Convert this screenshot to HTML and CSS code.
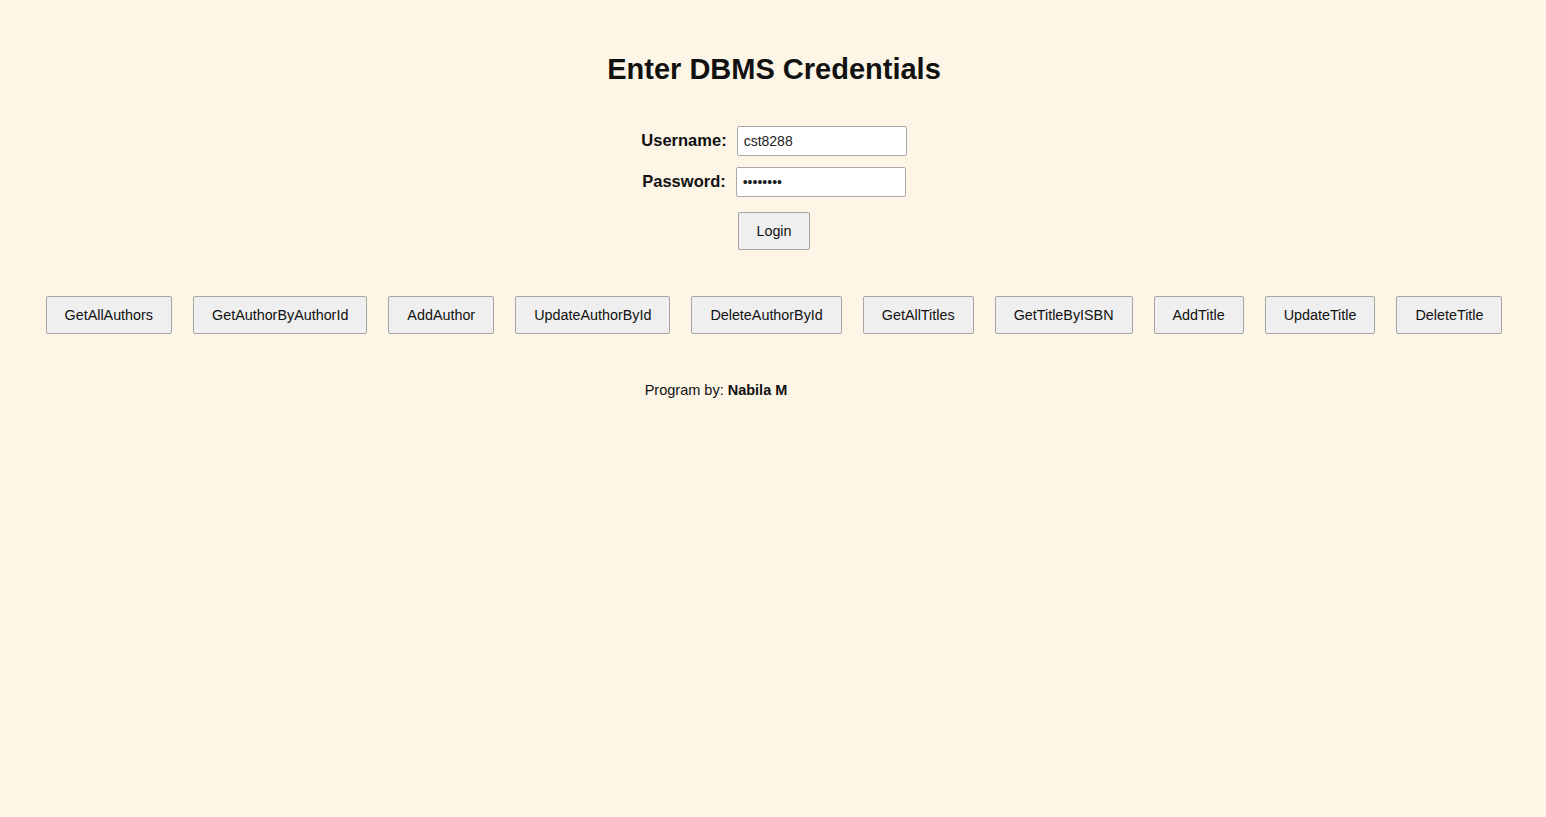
FILE: index.html
```html
<!DOCTYPE html>
<html>
<head>
<meta charset="utf-8">
<title>DBMS Credentials</title>
<link rel="stylesheet" href="styles.css">
</head>
<body>
<main class="page">
  <h1 class="title">Enter DBMS Credentials</h1>
  <form class="login">
    <div class="row">
      <label class="label" for="user">Username:</label>
      <input class="field" id="user" type="text" value="cst8288">
    </div>
    <div class="row">
      <label class="label" for="pass">Password:</label>
      <input class="field" id="pass" type="password" value="cst82888">
    </div>
    <div class="row submit">
      <button type="button" class="btn login-btn">Login</button>
    </div>
  </form>
  <div class="actions">
    <button type="button" class="btn">GetAllAuthors</button>
    <button type="button" class="btn">GetAuthorByAuthorId</button>
    <button type="button" class="btn">AddAuthor</button>
    <button type="button" class="btn">UpdateAuthorById</button>
    <button type="button" class="btn">DeleteAuthorById</button>
    <button type="button" class="btn">GetAllTitles</button>
    <button type="button" class="btn">GetTitleByISBN</button>
    <button type="button" class="btn">AddTitle</button>
    <button type="button" class="btn">UpdateTitle</button>
    <button type="button" class="btn">DeleteTitle</button>
  </div>
  <footer class="footer">
    <span>Program by: <b>Nabila M</b></span><span class="spacer"></span>
  </footer>
</main>
</body>
</html>
```
FILE: styles.css
```css
html, body {
  margin: 0;
  padding: 0;
}
body {
  background: #fdf5e6;
  font-family: "Liberation Sans", Arial, sans-serif;
  color: #000;
  min-height: 817px;
}
.page {
  padding-top: 52px;
  padding-left: 2px;
  display: flex;
  flex-direction: column;
  align-items: center;
}
.title {
  margin: 0;
  font-size: 29px;
  line-height: 34px;
  font-weight: bold;
  color: #111;
}
.login {
  margin-top: 40px;
  display: flex;
  flex-direction: column;
  align-items: center;
  gap: 11px;
}
.row {
  display: flex;
  align-items: center;
  justify-content: center;
  gap: 10px;
}
.label {
  font-size: 16.5px;
  font-weight: bold;
  color: #111;
  line-height: 18px;
  padding-bottom: 2px;
}
.field {
  box-sizing: border-box;
  width: 170px;
  height: 30px;
  padding: 0 6px;
  font-family: "Liberation Sans", Arial, sans-serif;
  font-size: 14px;
  color: #222;
  background: #fff;
  border: 1px solid #a9a9a9;
  border-radius: 2px;
}
.submit {
  margin-top: 4px;
}
.btn {
  box-sizing: border-box;
  height: 38px;
  padding: 0 18px;
  font-family: "Liberation Sans", Arial, sans-serif;
  font-size: 14.35px;
  color: #111;
  background: #efefef;
  border: 1px solid #a6a6a6;
  border-radius: 2px;
}
.login-btn {
  width: 72px;
  padding: 0;
}
.actions {
  margin-top: 46px;
  display: flex;
  justify-content: center;
  gap: 21px;
}
.footer {
  margin-top: 47px;
  font-size: 14.5px;
  line-height: 18px;
  color: #111;
  display: flex;
  justify-content: center;
}
.spacer {
  display: inline-block;
  width: 116px;
}
```
